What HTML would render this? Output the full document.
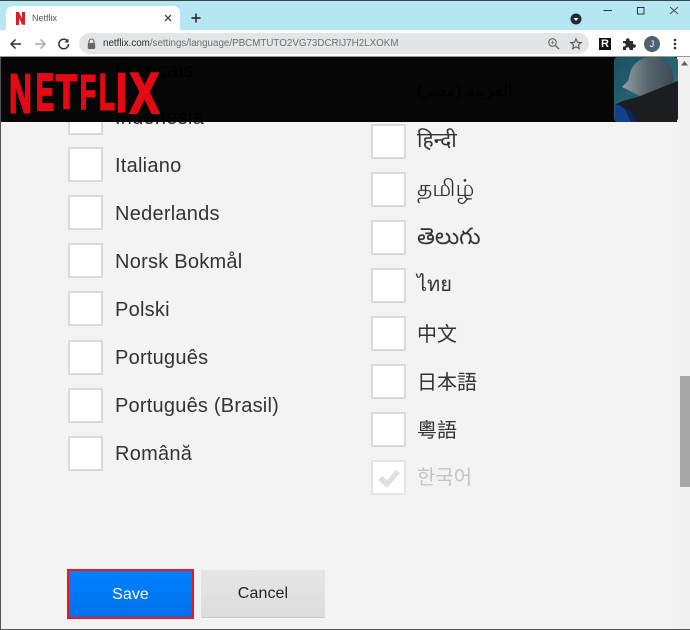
<!DOCTYPE html>
<html><head><meta charset="utf-8">
<style>
html,body{margin:0;padding:0;background:#f3f3f3}
body{width:690px;height:630px;position:relative;overflow:hidden;font-family:"Liberation Sans","Noto Sans CJK JP",sans-serif}
.a{position:absolute}
.cb{position:absolute;width:31px;height:31px;background:#fff;border:2px solid #dadada;box-sizing:content-box}
.t{position:absolute;font-size:20px;line-height:24px;color:#333;white-space:nowrap;letter-spacing:.25px}
.b{font-size:23px;letter-spacing:0}
.u{position:absolute;white-space:nowrap}
</style></head><body>
<!-- checkboxes left -->
<div class="cb" style="left:68px;top:52px"></div><div class="t" style="left:115px;top:59px;color:#000">Français</div>
<div class="cb" style="left:68px;top:100px"></div><div class="t" style="left:115px;top:106px">Indonesia</div>
<div class="cb" style="left:68px;top:147px"></div><div class="t" style="left:115px;top:154px">Italiano</div>
<div class="cb" style="left:68px;top:195px"></div><div class="t" style="left:115px;top:202px">Nederlands</div>
<div class="cb" style="left:68px;top:243px"></div><div class="t" style="left:115px;top:250px">Norsk Bokmål</div>
<div class="cb" style="left:68px;top:291px"></div><div class="t" style="left:115px;top:298px">Polski</div>
<div class="cb" style="left:68px;top:340px"></div><div class="t" style="left:115px;top:346px">Português</div>
<div class="cb" style="left:68px;top:388px"></div><div class="t" style="left:115px;top:394px;letter-spacing:.22px">Português (Brasil)</div>
<div class="cb" style="left:68px;top:436px"></div><div class="t" style="left:115px;top:442px">Română</div>
<!-- checkboxes right -->
<div class="cb" style="left:371px;top:76px"></div><div class="t" style="left:417px;top:79px;font-size:17px;color:#000" dir="rtl">العربية (مصر)</div>
<div class="cb" style="left:371px;top:124px"></div><div class="t" style="left:417px;top:129px;letter-spacing:0;font-size:21px">हिन्दी</div>
<div class="cb" style="left:371px;top:172px"></div><div class="t b" style="left:417px;top:176px;font-size:23.500px">தமிழ்</div>
<div class="cb" style="left:371px;top:220px"></div><div class="t b" style="left:417px;top:224px">తెలుగు</div>
<div class="cb" style="left:371px;top:268px"></div><div class="t" style="left:417px;top:273px;letter-spacing:0">ไทย</div>
<div class="cb" style="left:371px;top:316px"></div><div class="t" style="left:417px;top:321px;font-family:'Noto Sans CJK SC',sans-serif;letter-spacing:0">中文</div>
<div class="cb" style="left:371px;top:364px"></div><div class="t" style="left:417px;top:369px;font-family:'Noto Sans CJK JP',sans-serif;letter-spacing:0">日本語</div>
<div class="cb" style="left:371px;top:412px"></div><div class="t" style="left:417px;top:417px;font-family:'Noto Sans CJK TC',sans-serif;letter-spacing:0">粵語</div>
<div class="cb" style="left:371px;top:460px;border-color:#e4e4e4"></div>
<svg class="a" style="left:376px;top:465px" width="26" height="26" viewBox="0 0 26 26"><path d="M2 15l4-4 5 4 9-10 4 3-13 15z" fill="#dfdfdf"/></svg>
<div class="t" style="left:417px;top:464px;color:#c4c4c4;font-family:'Noto Sans CJK KR',sans-serif;letter-spacing:0">한국어</div>

<!-- browser chrome -->
<div class="a" style="left:0;top:0;width:690px;height:57px;background:#fff"></div>
<div class="a" style="left:0;top:0;width:690px;height:30px;background:#b5e7f3"></div>
<div class="a" style="left:0;top:0;width:690px;height:1px;background:#3d4448"></div>
<div class="a" style="left:0;top:56px;width:690px;height:1px;background:#9a9a9a"></div>
<div class="a" style="left:6px;top:6px;width:174px;height:26px;background:#fff;border-radius:7px 7px 0 0"></div>
<svg class="a" style="left:16px;top:12px" width="9" height="13" viewBox="0 0 9 13"><path d="M0 0h3l3 7V0h3v13l-3-.5L3 6v7l-3 .4z" fill="#d81f26"/></svg>
<div class="u" style="left:32px;top:12px;font-size:9px;line-height:12px;color:#555">Netflix</div>
<svg class="a" style="left:163px;top:13px" width="10" height="10" viewBox="0 0 10 10"><path d="M2 2l6 6M8 2l-6 6" stroke="#444" stroke-width="1.3"/></svg>
<svg class="a" style="left:190px;top:12px" width="12" height="12" viewBox="0 0 12 12"><path d="M6 1.500v9M1.500 6h9" stroke="#333" stroke-width="1.700"/></svg>
<svg class="a" style="left:569px;top:12px" width="14" height="14" viewBox="0 0 14 14"><circle cx="7" cy="7" r="5.500" fill="#222a30"/><path d="M4.500 6h5L7 9z" fill="#fff"/></svg>
<svg class="a" style="left:600px;top:0" width="90" height="18" viewBox="0 0 90 18"><path d="M3.500 10.500h8.500" stroke="#333" stroke-width="1"/><rect x="37.500" y="7.500" width="6.500" height="6.500" fill="none" stroke="#333"/><path d="M70 7l8 7M78 7l-8 7" stroke="#444" stroke-width=".9"/></svg>
<!-- toolbar -->
<svg class="a" style="left:8px;top:36px" width="64" height="16" viewBox="0 0 64 16"><path d="M13 8H3M7.500 3.500L3 8l4.500 4.500" fill="none" stroke="#333" stroke-width="1.500"/><path d="M37 8h-10M32.500 3.500L37 8l-4.500 4.500" fill="none" stroke="#aaa" stroke-width="1.500"/><path d="M60.500 8a4.800 4.800 0 1 1-1.400-3.400" fill="none" stroke="#333" stroke-width="1.500"/><path d="M60.500 2.500v4h-4z" fill="#333"/></svg>
<div class="a" style="left:79px;top:33px;width:510px;height:21px;border-radius:11px;background:#e4e5e6"></div>
<svg class="a" style="left:86px;top:38px" width="11" height="12" viewBox="0 0 11 12"><path d="M3 5V3.500a2.500 2.500 0 0 1 5 0V5" fill="none" stroke="#666" stroke-width="1.100"/><rect x="1.800" y="5" width="7.400" height="6" rx="1" fill="#666"/></svg>
<div class="u" style="left:103px;top:37px;font-size:9.800px;line-height:13px;color:#6b6f72"><span style="color:#2b2d30">netflix.com</span>/settings/language/PBCMTUTO2VG73DCRIJ7H2LXOKM</div>
<svg class="a" style="left:546px;top:36px" width="40" height="16" viewBox="0 0 40 16"><circle cx="6.500" cy="6.500" r="3.800" fill="none" stroke="#666" stroke-width="1.100"/><path d="M9.500 9.500l3.500 3.500" stroke="#666" stroke-width="1.300"/><path d="M4.800 6.500h3.400M6.500 4.800v3.400" stroke="#666" stroke-width=".8"/><path d="M30 2.800l1.500 3.500 3.700.3-2.800 2.400.9 3.700-3.300-2-3.300 2 .9-3.700-2.800-2.400 3.700-.3z" fill="none" stroke="#555" stroke-width="1.100"/></svg>
<div class="a" style="left:599px;top:38px;width:12px;height:12px;background:#111;color:#fff;font-size:11px;line-height:12px;font-weight:bold;text-align:center">R</div>
<svg class="a" style="left:622px;top:37px" width="14" height="14" viewBox="0 0 14 14"><path d="M1 4h3V3a1.800 1.800 0 0 1 3.600 0v1H11v3.200h1a1.800 1.800 0 0 1 0 3.600h-1V13H7.500v-1a1.700 1.700 0 0 0-3.400 0v1H1V9.500h1a1.700 1.700 0 0 0 0-3.400H1z" fill="#2b2b2b"/></svg>
<div class="a" style="left:644px;top:36px;width:16px;height:16px;border-radius:50%;background:#4b6274;color:#fff;font-size:9px;line-height:16px;text-align:center">J</div>
<svg class="a" style="left:672px;top:37px" width="6" height="14" viewBox="0 0 6 14"><circle cx="3" cy="3" r="1.300" fill="#333"/><circle cx="3" cy="7" r="1.300" fill="#333"/><circle cx="3" cy="11" r="1.300" fill="#333"/></svg>

<!-- header -->
<div class="a" style="left:0;top:57px;width:677px;height:65px;background:rgba(0,0,0,.975)"></div>
<svg class="a" style="left:0;top:57px" width="170" height="65" viewBox="0 0 170 65">
<g fill="#e50914" stroke="#e50914" font-family="Liberation Sans" font-weight="bold" font-size="32" text-anchor="middle" stroke-width="1.300">
<text transform="translate(20.500,55.500) scale(.98,1.72)">N</text>
<text transform="translate(45,53) scale(.86,1.62)">E</text>
<text transform="translate(66.500,51.500) scale(1.1,1.52)">T</text>
<text transform="translate(88,51.500) scale(.84,1.5)">F</text>
<text transform="translate(107,52.500) scale(.82,1.58)">L</text>
<text transform="translate(121.500,54.500) scale(1.2,1.7)">I</text>
<text transform="translate(144.500,56) scale(1.38,1.8)">X</text>
</g></svg>
<!-- avatar -->
<svg class="a" style="left:614px;top:57px" width="64" height="65" viewBox="0 0 64 65">
<defs><clipPath id="c"><rect width="64" height="65" rx="4"/></clipPath><linearGradient id="g" x1="0" y1="0" x2="1" y2="1"><stop offset="0" stop-color="#1b5161"/><stop offset="1" stop-color="#2d7485"/></linearGradient><linearGradient id="h" x1="0" y1="0" x2="1" y2="0"><stop offset="0" stop-color="#93a0a2"/><stop offset=".5" stop-color="#56666c"/><stop offset="1" stop-color="#3a4a50"/></linearGradient></defs>
<g clip-path="url(#c)"><rect width="64" height="65" fill="url(#g)"/>
<path d="M8 30l6-6 3-11c4-9 12-13 22-13 11 0 18 7 20 17l1 10-30 14-12-6-4-2z" fill="url(#h)"/>
<path d="M1 48c8-6 20-6 30-11l33-13v41H1z" fill="#1b1d20"/>
<path d="M1 48c4-1 8 2 11 6l5 11H1z" fill="#12408a"/>
<path d="M10 50c5 2 8 5 10 8l3 7h-6z" fill="#0f2558"/>
</g></svg>

<!-- scrollbar -->
<div class="a" style="left:679px;top:57px;width:11px;height:573px;background:#f1f1f1"></div>
<div class="a" style="left:680px;top:376px;width:10px;height:111px;background:#a8a8a8"></div>
<svg class="a" style="left:681px;top:61px" width="7" height="5" viewBox="0 0 7 5"><path d="M0 4.500L3.500 0 7 4.500z" fill="#606060"/></svg>

<!-- buttons -->
<div class="a" style="left:67px;top:569px;width:127px;height:50px;box-sizing:border-box;border:2px solid #f0141e;background:linear-gradient(#0080ff,#0071eb);color:#fff;font-size:16px;line-height:47px;text-align:center;letter-spacing:.1px">Save</div>
<div class="a" style="left:201px;top:570px;width:124px;height:48px;background:linear-gradient(#e6e6e6,#dddddd);border-bottom:1px solid #ccc;box-sizing:border-box;color:#222;font-size:16px;line-height:48px;text-align:center;letter-spacing:.1px;border-radius:2px">Cancel</div>

<div class="a" style="left:0;top:57px;width:1px;height:573px;background:#555"></div>
<div class="a" style="left:0;top:629px;width:690px;height:1px;background:#555"></div>
</body></html>
